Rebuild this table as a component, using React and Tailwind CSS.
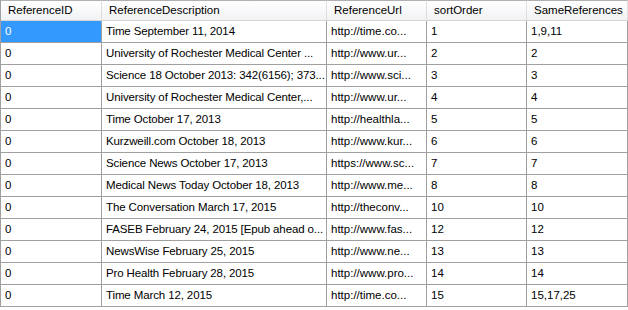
const COLS = ['ReferenceID', 'ReferenceDescription', 'ReferenceUrl', 'sortOrder', 'SameReferences'];

const ROWS = [
  ['0', 'Time September 11, 2014', 'http://time.co...', '1', '1,9,11'],
  ['0', 'University of Rochester Medical Center ...', 'http://www.ur...', '2', '2'],
  ['0', 'Science 18 October 2013: 342(6156); 373...', 'http://www.sci...', '3', '3'],
  ['0', 'University of Rochester Medical Center,...', 'http://www.ur...', '4', '4'],
  ['0', 'Time October 17, 2013', 'http://healthla...', '5', '5'],
  ['0', 'Kurzweill.com October 18, 2013', 'http://www.kur...', '6', '6'],
  ['0', 'Science News October 17, 2013', 'https://www.sc...', '7', '7'],
  ['0', 'Medical News Today October 18, 2013', 'http://www.me...', '8', '8'],
  ['0', 'The Conversation March 17, 2015', 'http://theconv...', '10', '10'],
  ['0', 'FASEB February 24, 2015 [Epub ahead o...', 'http://www.fas...', '12', '12'],
  ['0', 'NewsWise February 25, 2015', 'http://www.ne...', '13', '13'],
  ['0', 'Pro Health February 28, 2015', 'http://www.pro...', '14', '14'],
  ['0', 'Time March 12, 2015', 'http://time.co...', '15', '15,17,25'],
];

export default function App() {
  return (
    <div className="h-[310px] w-[628px] overflow-hidden bg-white text-[11.5px] text-black [font-family:'Liberation_Sans',Arial,sans-serif]">
      <div className="grid w-[627px] grid-cols-[101px_225px_100px_100px_101px] border-l border-[#a0a0a0]">
        {COLS.map((c) => (
          <div
            key={c}
            className="flex h-[21px] items-center border-t border-b border-r border-t-[#b0b0b0] border-b-[#d5d5d5] border-r-[#dedede] bg-gradient-to-b from-white to-[#f1f2f4] pl-[7px] whitespace-nowrap"
          >
            {c}
          </div>
        ))}
        {ROWS.map((row, ri) =>
          row.map((v, ci) => (
            <div
              key={ri + '-' + ci}
              className={
                'flex h-[22px] items-center overflow-hidden whitespace-nowrap border-b border-r border-[#a0a0a0] pl-[4px] ' +
                (ci === 1 ? 'tracking-[-0.12px] ' : '') +
                (ri === 0 && ci === 0 ? 'bg-[#3399ff] text-white' : '')
              }
            >
              {v}
            </div>
          ))
        )}
      </div>
    </div>
  );
}
